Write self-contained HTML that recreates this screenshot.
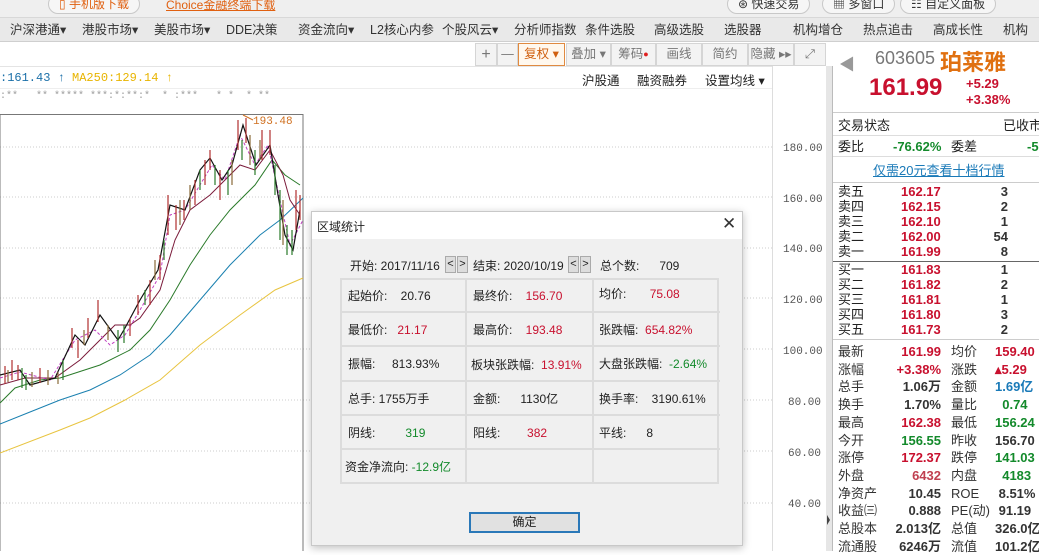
<!DOCTYPE html>
<html><head><meta charset="utf-8"><style>
*{margin:0;padding:0;box-sizing:border-box}
body{width:1039px;height:551px;overflow:hidden;background:#fff;font-family:"Liberation Sans","Noto Sans CJK SC",sans-serif;font-size:12px;color:#222;position:relative}
.a{position:absolute;white-space:nowrap}
.top{left:0;top:0;width:1039px;height:18px;background:#efefef;border-bottom:1px solid #d8d8d8}
.pill{position:absolute;top:-6px;height:20px;border:1px solid #c8c8c8;border-radius:10px;background:#f6f6f6;font-size:12px;line-height:18px;padding:0 10px;color:#333}
.nav{left:0;top:18px;width:1039px;height:24px;background:#e9e9e9;border-bottom:1px solid #cfcfcf;font-size:12.5px;line-height:24px;color:#333}
.tb{top:43px;height:23px;background:#f3f3f3;border:1px solid #d5d5d5;font-size:12.5px;line-height:21px;color:#777;text-align:center}
.rp{font-size:13px;line-height:15px}
.red{color:#c8102e}.grn{color:#138a2b}.blu{color:#1a7ab8}
.dlg{left:311px;top:211px;width:432px;height:335px;background:#f0f0f0;border:1px solid #c8c8c8;box-shadow:0 2px 8px rgba(0,0,0,.25)}
.cell{position:absolute;font-size:12px;line-height:14px}
</style></head><body>
<div class="a top">
  <div class="pill" style="left:48px;color:#e06010">▯ 手机版下载</div>
  <div class="a" style="left:166px;top:-4px;color:#e06010;text-decoration:underline;font-size:12px">Choice金融终端下载</div>
  <div class="pill" style="left:727px">⊛ 快速交易</div>
  <div class="pill" style="left:822px">▦ 多窗口</div>
  <div class="pill" style="left:900px">☷ 自定义面板</div>
</div>
<div class="a nav">
  <span class="a" style="left:10px">沪深港通▾</span>
  <span class="a" style="left:82px">港股市场▾</span>
  <span class="a" style="left:154px">美股市场▾</span>
  <span class="a" style="left:226px">DDE决策</span>
  <span class="a" style="left:298px">资金流向▾</span>
  <span class="a" style="left:370px">L2核心内参</span>
  <span class="a" style="left:442px">个股风云▾</span>
  <span class="a" style="left:514px">分析师指数</span>
  <span class="a" style="left:585px">条件选股</span>
  <span class="a" style="left:654px">高级选股</span>
  <span class="a" style="left:724px">选股器</span>
  <span class="a" style="left:793px">机构增仓</span>
  <span class="a" style="left:863px">热点追击</span>
  <span class="a" style="left:933px">高成长性</span>
  <span class="a" style="left:1003px">机构</span>
</div>
<div class="a tb" style="left:475px;width:22px;font-size:16px">+</div>
<div class="a tb" style="left:497px;width:21px">—</div>
<div class="a tb" style="left:518px;width:47px;color:#d06010;border-color:#e08a40;background:#fff8ee">复权 ▾</div>
<div class="a tb" style="left:566px;width:45px">叠加 ▾</div>
<div class="a tb" style="left:611px;width:45px">筹码<span style="color:#e02020;font-size:9px;vertical-align:top">●</span></div>
<div class="a tb" style="left:656px;width:46px">画线</div>
<div class="a tb" style="left:702px;width:46px">简约</div>
<div class="a tb" style="left:748px;width:46px">隐藏 ▸▸</div>
<div class="a tb" style="left:794px;width:32px">⤢</div>
<div class="a" style="left:0;top:66px;width:772px;height:1px;background:#e4e4e4"></div>
<div class="a" style="left:582px;top:70px;font-size:12.5px">沪股通</div>
<div class="a" style="left:637px;top:70px;font-size:12.5px">融资融券</div>
<div class="a" style="left:705px;top:70px;font-size:12.5px">设置均线 ▾</div>
<div class="a" style="left:0;top:71px;font-family:'Liberation Mono',monospace;font-size:12px"><span style="color:#1a6fa8">:161.43 ↑</span> <span style="color:#e8b400">MA250:129.14 ↑</span></div>
<div class="a" style="left:0;top:88px;width:772px;height:1px;background:#eee"></div>
<div class="a" style="left:0;top:91px;font-family:'Liberation Mono',monospace;font-size:10px;color:#999">:**&nbsp;&nbsp; ** *****&nbsp;***:*:**:*&nbsp; * :***&nbsp;&nbsp; * *&nbsp; * **</div>

<svg class="a" style="left:0;top:0" width="833" height="551">
 <g stroke="#ccc" stroke-dasharray="1 2" stroke-width="1">
  <line x1="0" y1="147" x2="772" y2="147"/><line x1="0" y1="197" x2="772" y2="197"/><line x1="0" y1="248" x2="772" y2="248"/><line x1="0" y1="298" x2="772" y2="298"/><line x1="0" y1="349" x2="772" y2="349"/><line x1="0" y1="400" x2="772" y2="400"/><line x1="0" y1="451" x2="772" y2="451"/><line x1="0" y1="503" x2="772" y2="503"/>
 </g>
 <line x1="772.5" y1="66" x2="772.5" y2="551" stroke="#ddd"/>
 <rect x="0" y="114.5" width="303" height="440" fill="none" stroke="#777"/>
 <g font-family="Liberation Mono,monospace" font-size="11" fill="#555">
  <text x="783" y="151">180.00</text><text x="783" y="202">160.00</text><text x="783" y="252">140.00</text><text x="783" y="303">120.00</text><text x="783" y="354">100.00</text><text x="788" y="405">80.00</text><text x="788" y="456">60.00</text><text x="788" y="507">40.00</text>
 </g>
 <polyline fill="none" stroke="#e8c440" stroke-width="1" points="0,453 60,430 90,418 125,400 160,380 200,345 240,315 275,290 303,278"/>
 <polyline fill="none" stroke="#1a80b0" stroke-width="1" points="0,424 30,412 60,400 90,390 120,375 150,355 170,335 200,300 230,265 260,235 280,220 303,198"/>
 <polyline fill="none" stroke="#2a7a2a" stroke-width="1" points="0,403 15,388 40,380 60,378 100,365 130,350 150,330 170,300 190,265 210,235 230,210 255,185 272,160 285,175 300,185"/>
 <polyline fill="none" stroke="#7a1a3a" stroke-width="1" points="0,385 25,378 55,378 80,360 100,340 115,325 130,325 140,318 160,290 175,240 190,210 210,195 225,180 240,165 255,170 270,150 283,175 290,200 300,215"/>
 <polyline fill="none" stroke="#c040c0" stroke-width="1" stroke-dasharray="3 2" points="0,378 20,372 50,380 75,340 95,330 110,345 125,335 140,310 160,275 170,215 185,210 200,185 212,165 225,180 240,135 255,165 268,145 280,200 290,245 303,220"/>
 <polyline fill="none" stroke="#111" stroke-width="1.2" points="0,375 20,370 30,385 55,378 75,335 85,345 100,315 118,340 125,328 140,300 158,270 170,205 185,210 200,170 210,158 222,180 232,165 243,125 256,165 270,145 278,195 285,235 293,250 300,210"/>
 <g stroke-width="1.2">
  <path stroke="#b03030" d="M5,366v18M12,360v20M18,365v15M40,368v15M72,328v20M78,340v18M88,318v20M98,300v22M130,318v18M138,295v20M150,280v25M160,255v25M168,195v40M176,205v25M184,200v20M195,180v25M205,160v25M210,150v20M220,170v30M238,120v30M246,118v25M262,130v30M270,130v25M296,190v40M300,195v25"/>
  <path stroke="#2a7a2a" d="M22,368v20M26,375v15M63,360v20M118,330v22M124,325v18M145,290v15M164,240v20M200,170v20M215,165v20M228,170v25M242,140v20M255,150v25M275,165v30M280,190v50M287,225v30M292,230v25"/>
  <path stroke="#8a6a3a" d="M8,370v12M32,372v15M48,370v15M58,372v12M84,330v15M108,325v15M155,260v20M180,200v25M190,185v25M232,160v25M250,135v30M260,140v20M283,200v45"/>
 </g>
 <text x="253" y="124" font-family="Liberation Mono,monospace" font-size="11" fill="#d07020">193.48</text>
 <line x1="243" y1="115" x2="253" y2="120" stroke="#d07020"/>
 <rect x="826" y="66" width="7" height="485" fill="#e6e6e6"/>
 <line x1="832.5" y1="66" x2="832.5" y2="551" stroke="#bbb"/>
 <polygon points="827,515 830,520 827,525" fill="#444"/>
</svg>

<!-- right panel -->
<div class="a" style="left:833px;top:42px;width:206px;height:509px;background:#fff;font-family:'Liberation Sans','Noto Sans CJK SC',sans-serif">
 <div class="a" style="left:6px;top:9px;color:#999;font-size:16px">◀</div>
 <div class="a" style="left:42px;top:6px;color:#777;font-size:18px">603605</div>
 <div class="a" style="left:107px;top:3px;color:#e07010;font-size:22px;font-weight:bold">珀莱雅</div>
 <div class="a" style="left:36px;top:32px;color:#c8102e;font-size:24px;font-weight:bold">161.99</div>
 <div class="a" style="left:133px;top:34px;color:#c8102e;font-size:13px;font-weight:bold;line-height:16px">+5.29<br>+3.38%</div>
 <div class="a" style="left:0;top:70px;width:206px;height:1px;background:#ccc"></div>
 <div class="a rp" style="left:5px;top:76px">交易状态</div><div class="a rp" style="left:170px;top:76px">已收市</div>
 <div class="a" style="left:0;top:93px;width:206px;height:1px;background:#ddd"></div>
 <div class="a rp" style="left:5px;top:97px">委比</div><div class="a rp grn" style="left:60px;top:97px;font-weight:bold">-76.62%</div><div class="a rp" style="left:118px;top:97px">委差</div><div class="a rp grn" style="left:194px;top:97px;font-weight:bold">-59</div>
 <div class="a" style="left:0;top:114px;width:206px;height:1px;background:#ddd"></div>
 <div class="a rp blu" style="left:40px;top:121px;text-decoration:underline">仅需20元查看十档行情</div>
 <div class="a" style="left:0;top:140px;width:206px;height:1px;background:#ccc"></div>
 <div class="a" style="left:5px;top:142px;font-size:13px;line-height:15px">卖五<br>卖四<br>卖三<br>卖二<br>卖一</div>
 <div class="a red" style="left:68px;top:142px;font-size:13px;line-height:15px;font-weight:bold">162.17<br>162.15<br>162.10<br>162.00<br>161.99</div>
 <div class="a" style="left:145px;top:142px;width:30px;text-align:right;font-size:13px;line-height:15px;font-weight:bold;color:#333">3<br>2<br>1<br>54<br>8</div>
 <div class="a" style="left:0;top:219px;width:206px;height:1px;background:#666"></div>
 <div class="a" style="left:5px;top:220px;font-size:13px;line-height:15px">买一<br>买二<br>买三<br>买四<br>买五</div>
 <div class="a red" style="left:68px;top:220px;font-size:13px;line-height:15px;font-weight:bold">161.83<br>161.82<br>161.81<br>161.80<br>161.73</div>
 <div class="a" style="left:145px;top:220px;width:30px;text-align:right;font-size:13px;line-height:15px;font-weight:bold;color:#333">1<br>2<br>1<br>3<br>2</div>
 <div class="a" style="left:0;top:297px;width:206px;height:1px;background:#ccc"></div>
 <div class="a" style="left:5px;top:301px;font-size:13px;line-height:17.7px;color:#333">最新<br>涨幅<br>总手<br>换手<br>最高<br>今开<br>涨停<br>外盘<br>净资产<br>收益㈢<br>总股本<br>流通股</div>
 <div class="a" style="left:50px;top:301px;width:58px;text-align:right;font-size:13px;line-height:17.7px;font-weight:bold;color:#333"><span class="red">161.99</span><br><span class="red">+3.38%</span><br>1.06万<br>1.70%<br><span class="red">162.38</span><br><span class="grn">156.55</span><br><span class="red">172.37</span><br><span style="color:#c04050">6432</span><br>10.45<br>0.888<br>2.013亿<br>6246万</div>
 <div class="a" style="left:118px;top:301px;font-size:13px;line-height:17.7px;color:#333">均价<br>涨跌<br>金额<br>量比<br>最低<br>昨收<br>跌停<br>内盘<br>ROE<br>PE(动)<br>总值<br>流值</div>
 <div class="a" style="left:162px;top:301px;font-size:13px;line-height:17.7px;font-weight:bold;color:#333"><span class="red">159.40</span><br><span class="red">▴5.29</span><br><span class="blu">1.69亿</span><br><span class="grn">&nbsp;&nbsp;0.74</span><br><span class="grn">156.24</span><br>156.70<br><span class="grn">141.03</span><br><span class="grn">&nbsp;&nbsp;4183</span><br>&nbsp;8.51%<br>&nbsp;91.19<br>326.0亿<br>101.2亿</div>
</div>

<!-- dialog -->
<div class="a dlg">
 <div class="a" style="left:0;top:0;width:430px;height:27px;background:#fff"></div>
 <div class="a" style="left:5px;top:6px;font-size:12px">区域统计</div>
 <div class="a" style="left:410px;top:2px;font-size:17px;color:#333">✕</div>
 <div class="a" style="left:38px;top:45px;font-size:12px">开始: 2017/11/16</div>
 <div class="a" style="left:133px;top:44px;width:11px;height:17px;border:1px solid #aaa;background:#ddd;font-size:11px;text-align:center;line-height:15px">&lt;</div>
 <div class="a" style="left:145px;top:44px;width:11px;height:17px;border:1px solid #aaa;background:#ddd;font-size:11px;text-align:center;line-height:15px">&gt;</div>
 <div class="a" style="left:161px;top:45px;font-size:12px">结束: 2020/10/19</div>
 <div class="a" style="left:256px;top:44px;width:11px;height:17px;border:1px solid #aaa;background:#ddd;font-size:11px;text-align:center;line-height:15px">&lt;</div>
 <div class="a" style="left:268px;top:44px;width:11px;height:17px;border:1px solid #aaa;background:#ddd;font-size:11px;text-align:center;line-height:15px">&gt;</div>
 <div class="a" style="left:288px;top:45px;font-size:12px">总个数:&nbsp;&nbsp;&nbsp;&nbsp;&nbsp;&nbsp;709</div>
 <svg class="a" style="left:28px;top:66px" width="380" height="206">
  <g stroke="#dcdcdc" stroke-width="2" fill="none">
   <rect x="1" y="1" width="377" height="204"/>
   <line x1="126" y1="0" x2="126" y2="206"/><line x1="253" y1="0" x2="253" y2="206"/>
   <line x1="0" y1="34" x2="380" y2="34"/><line x1="0" y1="68" x2="380" y2="68"/><line x1="0" y1="103" x2="380" y2="103"/><line x1="0" y1="137" x2="380" y2="137"/><line x1="0" y1="171" x2="380" y2="171"/>
  </g>
 </svg>
 <div class="cell" style="left:36px;top:77px">起始价:&nbsp;&nbsp;&nbsp;&nbsp;20.76</div>
 <div class="cell" style="left:161px;top:77px">最终价:&nbsp;&nbsp;&nbsp;&nbsp;<span class="red">156.70</span></div>
 <div class="cell" style="left:287px;top:75px">均价:&nbsp;&nbsp;&nbsp;&nbsp;&nbsp;&nbsp;&nbsp;<span class="red">75.08</span></div>
 <div class="cell" style="left:36px;top:111px">最低价:&nbsp;&nbsp;&nbsp;<span class="red">21.17</span></div>
 <div class="cell" style="left:161px;top:111px">最高价:&nbsp;&nbsp;&nbsp;&nbsp;<span class="red">193.48</span></div>
 <div class="cell" style="left:287px;top:111px">张跌幅:&nbsp;&nbsp;<span class="red">654.82%</span></div>
 <div class="cell" style="left:36px;top:145px">振幅:&nbsp;&nbsp;&nbsp;&nbsp;&nbsp;813.93%</div>
 <div class="cell" style="left:159px;top:146px">板块张跌幅:&nbsp;&nbsp;<span class="red">13.91%</span></div>
 <div class="cell" style="left:287px;top:145px">大盘张跌幅:&nbsp;&nbsp;<span class="grn">-2.64%</span></div>
 <div class="cell" style="left:36px;top:180px">总手:&nbsp;1755万手</div>
 <div class="cell" style="left:161px;top:180px">金额:&nbsp;&nbsp;&nbsp;&nbsp;&nbsp;&nbsp;1130亿</div>
 <div class="cell" style="left:287px;top:180px">换手率:&nbsp;&nbsp;&nbsp;&nbsp;3190.61%</div>
 <div class="cell" style="left:36px;top:214px">阴线:&nbsp;&nbsp;&nbsp;&nbsp;&nbsp;&nbsp;&nbsp;&nbsp;&nbsp;<span class="grn">319</span></div>
 <div class="cell" style="left:161px;top:214px">阳线:&nbsp;&nbsp;&nbsp;&nbsp;&nbsp;&nbsp;&nbsp;&nbsp;<span class="red">382</span></div>
 <div class="cell" style="left:287px;top:214px">平线:&nbsp;&nbsp;&nbsp;&nbsp;&nbsp;&nbsp;8</div>
 <div class="cell" style="left:33px;top:248px">资金净流向:&nbsp;<span class="grn">-12.9亿</span></div>
 <div class="a" style="left:157px;top:300px;width:111px;height:21px;border:2px solid #2a78b8;background:#e1e1e1;text-align:center;line-height:17px;font-size:12px">确定</div>
</div>
</body></html>
